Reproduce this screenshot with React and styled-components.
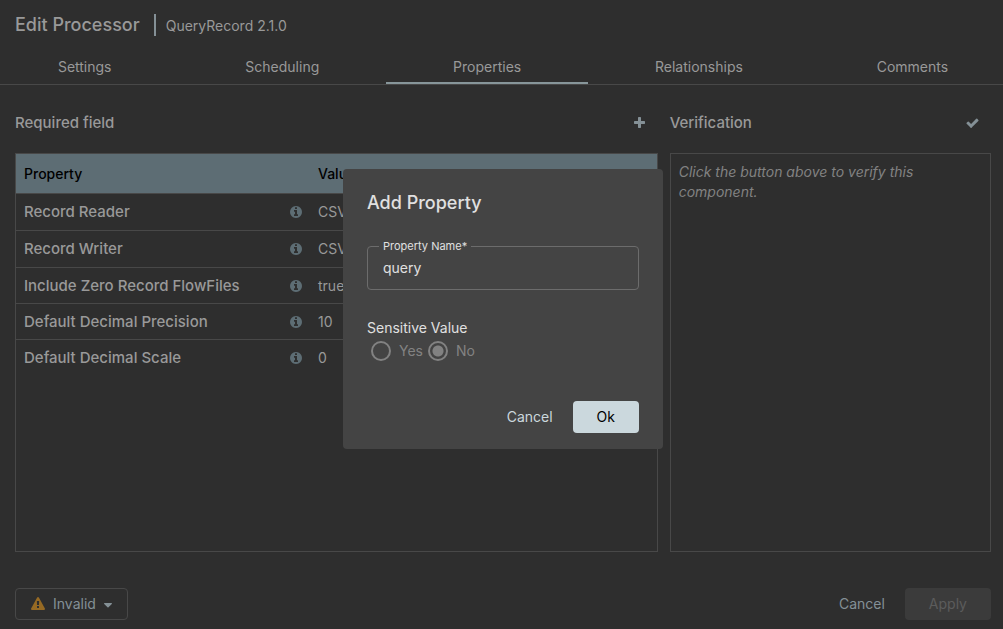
import React, { useState } from "react";
import styled, { createGlobalStyle } from "styled-components";

const color = {
  page: "#2e2e2e",
  line: "#484848",
  text: "#999999",
  muted: "#828282",
  accent: "#5d6d74",
  accentText: "#849096",
  dialog: "#444444",
  dialogText: "#e0e0e0",
  disabled: "#828282",
  primary: "#cbd8dd",
};

const GlobalStyle = createGlobalStyle`
  *, *::before, *::after { box-sizing: border-box; }
  body {
    margin: 0;
    background: ${color.page};
    color: ${color.text};
    font: 400 14px/20px Inter, "Liberation Sans", sans-serif;
  }
  button, input { font: inherit; color: inherit; }
`;

const Page = styled.main`
  display: flex;
  flex-direction: column;
  min-height: 100vh;
  overflow: hidden;
`;

const TitleBar = styled.header`
  display: flex;
  align-items: center;
  height: 48px;
  padding: 2px 15px 0;
`;

const Title = styled.h1`
  margin: 0;
  font-size: 18px;
  line-height: 24px;
  font-weight: 500;
`;

const TitleDivider = styled.span`
  width: 2px;
  height: 22px;
  margin: 0 10px 0 14px;
  background: ${color.accentText};
`;

const Subtitle = styled.span`
  padding-top: 1px;
`;

const TabBar = styled.nav`
  display: flex;
  height: 37px;
  margin: 0 -12px 0 -9px;
  border-bottom: 1px solid ${color.line};
`;

const Tab = styled.button`
  flex: 1 0 auto;
  padding: 4px 24px 0;
  border: 0;
  border-bottom: 2px solid ${(p) => (p.$active ? "#87969a" : "transparent")};
  background: none;
`;

const Content = styled.div`
  flex: 1;
  display: flex;
  gap: 12px;
  padding: 20px 12px 0 15px;
`;

const Panel = styled.section`
  display: flex;
  flex-direction: column;
  flex: ${(p) => p.$grow} 1 0;
  min-width: 0;
`;

const PanelHeader = styled.div`
  display: flex;
  align-items: center;
  justify-content: space-between;
  height: 36px;
  margin-bottom: 12px;
  padding-right: 12px;
`;

const PanelTitle = styled.h2`
  margin: 0;
  font-size: 15px;
  font-weight: 500;
`;

const IconButton = styled.button`
  display: flex;
  padding: 0;
  border: 0;
  background: none;
  color: ${color.accentText};
`;

const PanelBody = styled.div`
  flex: 1;
  border: 1px solid ${color.line};
`;

const Hint = styled.p`
  margin: 0;
  padding: 8px;
  color: ${color.muted};
  font-style: italic;
`;

const PropertyTable = styled.table`
  width: 100%;
  table-layout: fixed;
  border-collapse: separate;
  border-spacing: 0;
`;

const HeadCell = styled.th`
  width: ${(p) => p.$width || "auto"};
  height: 40px;
  padding: 0 8px;
  border-bottom: 1px solid ${color.line};
  background: ${color.accent};
  color: #000;
  font-weight: 500;
  text-align: left;
`;

const Row = styled.tr`
  height: ${(p) => (p.$service ? "37px" : "36px")};
  &:not(:last-child) > td { border-bottom: 1px solid ${color.line}; }
`;

const Cell = styled.td`
  padding: 0 8px;
`;

const PropertyName = styled.div`
  display: flex;
  align-items: center;
  justify-content: space-between;
  font-size: 15px;
  font-weight: 500;
  svg { color: ${color.accent}; }
`;

const Footer = styled.footer`
  display: flex;
  justify-content: space-between;
  padding: 36px 12px 9px 15px;
`;

const Actions = styled.div`
  display: flex;
  justify-content: flex-end;
  gap: 4px;
`;

const Button = styled.button`
  height: 32px;
  padding: 0 ${(p) => (p.$filled ? "24px" : "16px")};
  border: 0;
  border-radius: 4px;
  background: ${(p) => (p.$filled ? color.primary : "none")};
  color: ${(p) => (p.$filled ? "#000" : p.$bright ? color.primary : color.accentText)};
  &:disabled { background: #3b3b3b; color: #5c5c5c; }
`;

const StatusButton = styled.button`
  display: flex;
  align-items: center;
  gap: 8px;
  height: 32px;
  padding: 0 15px;
  border: 1px solid ${color.line};
  border-radius: 4px;
  background: none;
  color: ${color.accentText};
  svg:first-child { color: #966a24; }
  svg:last-child { margin-top: 3px; }
`;

const Overlay = styled.div`
  position: fixed;
  inset: 0 0 11px 3px;
  display: grid;
  place-items: center;
`;

const Dialog = styled.form`
  display: flex;
  flex-direction: column;
  width: 320px;
  max-width: 100%;
  padding: 21px 24px 16px;
  border-radius: 4px;
  background: ${color.dialog};
  color: ${color.dialogText};
`;

const DialogTitle = styled.h2`
  margin: 0 0 24px;
  font-size: 18px;
  line-height: 26px;
  font-weight: 500;
`;

const Field = styled.fieldset`
  height: 50px;
  margin: 0 0 28px;
  padding: 0 15px;
  border: 1px solid #6c6c6c;
  border-radius: 4px;
  legend {
    margin-left: -4px;
    padding: 0 4px;
    font-size: 11px;
    line-height: 12px;
  }
`;

const TextInput = styled.input`
  display: block;
  width: 100%;
  height: 30px;
  padding: 0;
  border: 0;
  outline: 0;
  background: none;
`;

const RadioGroup = styled.div`
  display: flex;
  align-items: center;
  gap: 5px;
  height: 26px;
  margin-bottom: 37px;
  padding-left: 4px;
`;

const RadioLabel = styled.label`
  display: flex;
  align-items: center;
  gap: 8px;
  color: ${color.disabled};
`;

const Radio = styled.input.attrs({ type: "radio" })`
  appearance: none;
  width: 20px;
  height: 20px;
  margin: 0;
  border: 2px solid ${color.disabled};
  border-radius: 50%;
  &:checked {
    background: radial-gradient(circle, ${color.disabled} 5px, transparent 6px);
  }
`;

const icons = {
  plus: {
    width: 13,
    height: 14,
    viewBox: "64 0 1664 1792",
    d: "M1600 736v192q0 40-28 68t-68 28h-416v416q0 40-28 68t-68 28h-192q-40 0-68-28t-28-68v-416h-416q-40 0-68-28t-28-68v-192q0-40 28-68t68-28h416v-416q0-40 28-68t68-28h192q40 0 68 28t28 68v416h416q40 0 68 28t28 68z",
  },
  check: {
    width: 13,
    height: 14,
    viewBox: "64 0 1664 1792",
    d: "M1671 566q0 40-28 68l-724 724-136 136q-28 28-68 28t-68-28l-136-136-362-362q-28-28-28-68t28-68l136-136q28-28 68-28t68 28l294 295 656-657q28-28 68-28t68 28l136 136q28 28 28 68z",
  },
  info: {
    width: 12,
    height: 14,
    viewBox: "128 0 1536 1792",
    d: "M1152 1376v-160q0-14-9-23t-23-9h-96v-512q0-14-9-23t-23-9h-320q-14 0-23 9t-9 23v160q0 14 9 23t23 9h96v320h-96q-14 0-23 9t-9 23v160q0 14 9 23t23 9h448q14 0 23-9t9-23zm-128-896v-160q0-14-9-23t-23-9h-192q-14 0-23 9t-9 23v160q0 14 9 23t23 9h192q14 0 23-9t9-23zm640 416q0 209-103 385.5t-279.5 279.5-385.5 103-385.5-103-279.5-279.5-103-385.5 103-385.5 279.5-279.5 385.5-103 385.5 103 279.5 279.5 103 385.5z",
  },
  warning: {
    width: 14,
    height: 14,
    viewBox: "0 0 1792 1792",
    d: "M1024 1375v-190q0-14-9.5-23.5t-22.5-9.5h-192q-13 0-22.5 9.5t-9.5 23.5v190q0 14 9.5 23.5t22.5 9.5h192q13 0 22.5-9.5t9.5-23.5zm-2-374l18-459q0-12-10-19-13-11-24-11h-220q-11 0-24 11-10 7-10 21l17 457q0 10 10 16.5t24 6.5h185q14 0 23.5-6.5t10.5-16.5zm-14-934l768 1408q35 63-2 126-17 29-46.5 46t-63.5 17h-1536q-34 0-63.5-17t-46.5-46q-37-63-2-126l768-1408q17-31 47-49t65-18 65 18 47 49z",
  },
  caret: {
    width: 8,
    height: 5,
    viewBox: "0 0 8 5",
    d: "M.5 0h7q.8.2.3.9l-3.3 3.4q-.5.4-1 0l-3.3-3.4q-.5-.7.3-.9z",
  },
};

function Icon({ name }) {
  const { d, ...box } = icons[name];
  return (
    <svg {...box} fill="currentColor" aria-hidden="true">
      <path d={d} />
    </svg>
  );
}

const tabs = ["Settings", "Scheduling", "Properties", "Relationships", "Comments"];

const properties = [
  { name: "Record Reader", value: "CSV", service: true },
  { name: "Record Writer", value: "CSV", service: true },
  { name: "Include Zero Record FlowFiles", value: "true" },
  { name: "Default Decimal Precision", value: "10" },
  { name: "Default Decimal Scale", value: "0" },
];

export default function App() {
  const [tab, setTab] = useState("Properties");
  const [name, setName] = useState("query");

  return (
    <>
      <GlobalStyle />
      <Page>
        <TitleBar>
          <Title>Edit Processor</Title>
          <TitleDivider />
          <Subtitle>QueryRecord 2.1.0</Subtitle>
        </TitleBar>
        <TabBar>
          {tabs.map((t) => (
            <Tab key={t} type="button" $active={t === tab} onClick={() => setTab(t)}>{t}</Tab>
          ))}
        </TabBar>
        <Content>
          <Panel $grow={2}>
            <PanelHeader>
              <PanelTitle>Required field</PanelTitle>
              <IconButton type="button" aria-label="Add property"><Icon name="plus" /></IconButton>
            </PanelHeader>
            <PanelBody>
              <PropertyTable>
                <thead>
                  <tr>
                    <HeadCell $width="294px">Property</HeadCell>
                    <HeadCell>Value</HeadCell>
                  </tr>
                </thead>
                <tbody>
                  {properties.map((p) => (
                    <Row key={p.name} $service={p.service}>
                      <Cell>
                        <PropertyName>{p.name}<Icon name="info" /></PropertyName>
                      </Cell>
                      <Cell>{p.value}</Cell>
                    </Row>
                  ))}
                </tbody>
              </PropertyTable>
            </PanelBody>
          </Panel>
          <Panel $grow={1}>
            <PanelHeader>
              <PanelTitle>Verification</PanelTitle>
              <IconButton type="button" aria-label="Verify"><Icon name="check" /></IconButton>
            </PanelHeader>
            <PanelBody>
              <Hint>Click the button above to verify this component.</Hint>
            </PanelBody>
          </Panel>
        </Content>
        <Footer>
          <StatusButton type="button">
            <Icon name="warning" />
            Invalid
            <Icon name="caret" />
          </StatusButton>
          <Actions>
            <Button type="button">Cancel</Button>
            <Button type="button" $filled disabled>Apply</Button>
          </Actions>
        </Footer>
      </Page>
      <Overlay>
        <Dialog role="dialog" aria-labelledby="dialog-title" onSubmit={(e) => e.preventDefault()}>
          <DialogTitle id="dialog-title">Add Property</DialogTitle>
          <Field>
            <legend><label htmlFor="property-name">Property Name*</label></legend>
            <TextInput id="property-name" value={name} onChange={(e) => setName(e.target.value)} />
          </Field>
          <div id="sensitive-label">Sensitive Value</div>
          <RadioGroup role="radiogroup" aria-labelledby="sensitive-label">
            <RadioLabel><Radio name="sensitive" value="yes" disabled />Yes</RadioLabel>
            <RadioLabel><Radio name="sensitive" value="no" defaultChecked disabled />No</RadioLabel>
          </RadioGroup>
          <Actions>
            <Button type="button" $bright>Cancel</Button>
            <Button type="submit" $filled>Ok</Button>
          </Actions>
        </Dialog>
      </Overlay>
    </>
  );
}
